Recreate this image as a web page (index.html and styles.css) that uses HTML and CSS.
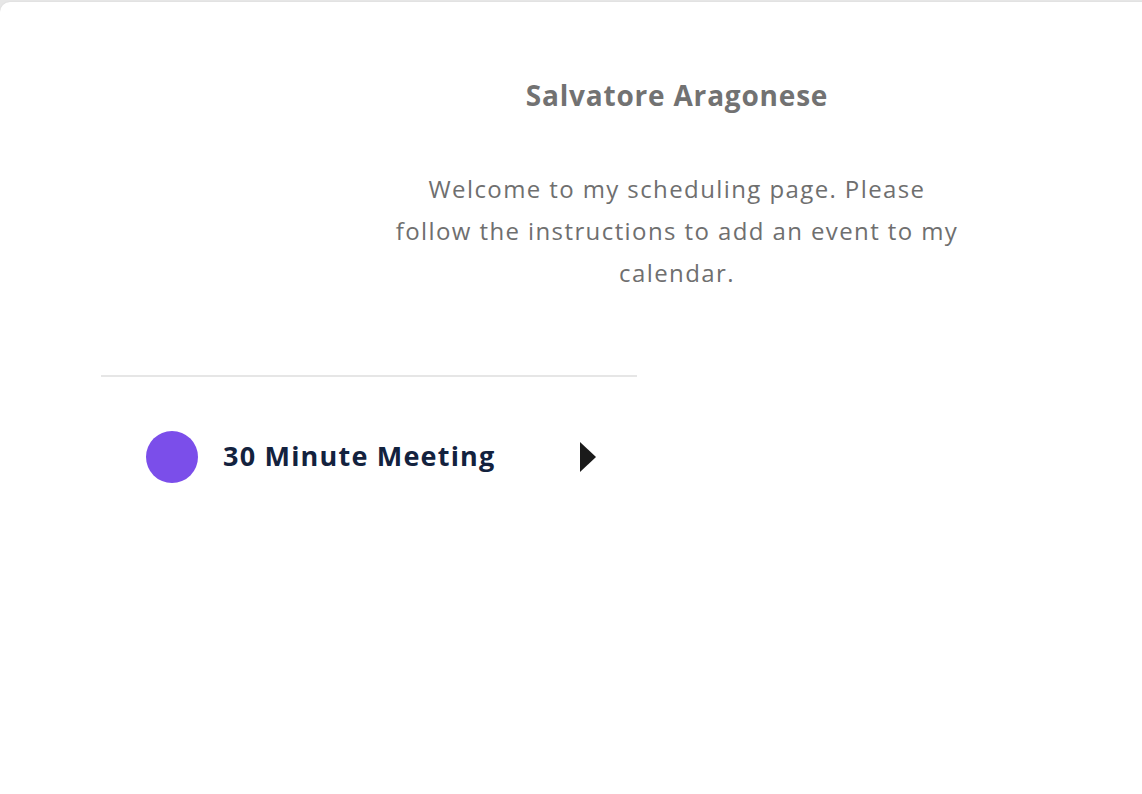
FILE: index.html
```html
<!DOCTYPE html>
<html lang="en">
<head>
<meta charset="utf-8">
<title>Salvatore Aragonese</title>
<link rel="stylesheet" href="styles.css">
</head>
<body>
<main class="card">
  <header class="profile">
    <h1 class="name">Salvatore Aragonese</h1>
    <p class="desc">Welcome to my scheduling page. Please follow the instructions to add an event to my calendar.</p>
  </header>
  <section class="events">
    <a class="event" href="#">
      <span class="dot"></span>
      <span class="title">30 Minute Meeting</span>
      <span class="arrow"></span>
    </a>
  </section>
</main>
</body>
</html>
```

FILE: styles.css
```css
html, body {
  margin: 0;
  padding: 0;
  overflow: hidden;
}
body {
  background: #e7e7e7;
  font-family: "Open Sans", "Liberation Sans", sans-serif;
  height: 794px;
}
.card {
  margin-top: 2px;
  width: 1354px;
  height: 792px;
  box-sizing: border-box;
  padding: 75px 101px 0 101px;
  background: #ffffff;
  border-radius: 10px 10px 0 0;
  box-shadow: 0 0 2px rgba(0, 0, 0, 0.08);
  overflow: hidden;
}
.profile {
  width: 1152px;
  display: flex;
  flex-direction: column;
  align-items: center;
  text-align: center;
}
.name {
  margin: 0;
  font-size: 28px;
  line-height: 36px;
  font-weight: 700;
  letter-spacing: 0.8px;
  color: #727272;
}
.desc {
  margin: 55px 0 0;
  max-width: 576px;
  font-size: 24px;
  line-height: 42px;
  font-weight: 400;
  letter-spacing: 1.4px;
  color: #6f6f6f;
}
.events {
  margin-top: 81px;
  display: grid;
  grid-template-columns: 536px 536px;
  column-gap: 80px;
}
.event {
  display: flex;
  align-items: center;
  height: 160px;
  padding: 0 41px 0 45px;
  border-top: 2px solid #e6e6e6;
  text-decoration: none;
}
.dot {
  width: 52px;
  height: 52px;
  border-radius: 50%;
  background: #7b4eea;
  flex: none;
}
.title {
  margin-left: 25px;
  margin-bottom: 3px;
  font-size: 27px;
  font-weight: 700;
  letter-spacing: 1.2px;
  color: #13223e;
}
.arrow {
  margin-left: auto;
  width: 0;
  height: 0;
  border-top: 15px solid transparent;
  border-bottom: 15px solid transparent;
  border-left: 16px solid #1a1a1a;
}
```
